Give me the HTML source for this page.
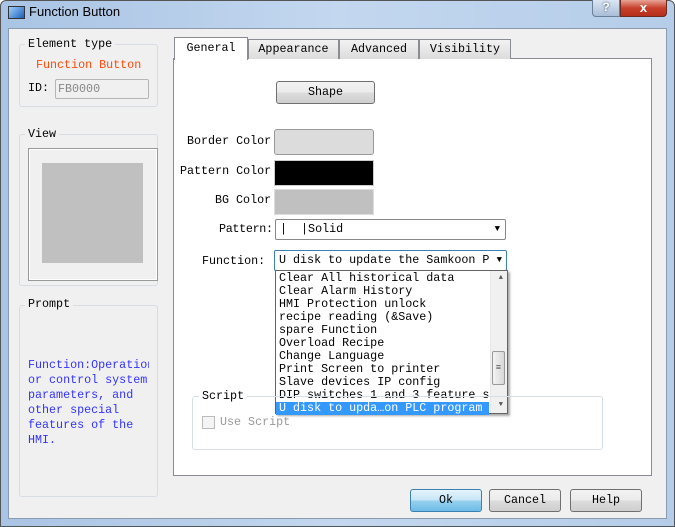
<!DOCTYPE html><html><head><style>
*{margin:0;padding:0;box-sizing:border-box}
body{width:675px;height:527px;overflow:hidden;background:#fff;font-family:"Liberation Mono","DejaVu Sans Mono",monospace;font-size:11.7px;color:#000;position:relative}
.a{position:absolute}
.frame{left:0;top:0;width:675px;height:527px;background:linear-gradient(90deg,#a9c4e4,#c3d7ef 50%,#b5cde9);border:1px solid #555;border-radius:6px 6px 0 0}
.client{left:8px;top:28px;width:659px;height:491px;background:#f0f0f0;border:1px solid #8a9bb0}
.grp{border:1px solid #d8dde3;border-radius:3px}
.lbl{background:#f0f0f0;padding:0 3px}
.btn{border:1px solid #707070;border-radius:3px;background:linear-gradient(#f2f2f2,#ebebeb 50%,#dcdcdc 51%,#cfcfcf);text-align:center;line-height:21px}
.tab{top:39px;height:20px;border:1px solid #898c95;border-bottom:none;background:linear-gradient(#f2f2f2,#dcdcdc);text-align:center;line-height:19px}
.li{height:13px;line-height:13px;padding-left:3px;white-space:nowrap;overflow:hidden}
</style></head><body>
<div class="a frame"></div>
<div class="a" style="left:8px;top:6px;width:17px;height:13px;border:1px solid #333;background:linear-gradient(135deg,#9fd0ff,#1c5fb8)"></div>
<div class="a" style="left:29px;top:4px;font-family:'Liberation Sans',sans-serif;font-size:13px">Function Button</div>
<div class="a" style="left:592px;top:0;width:28px;height:17px;border:1px solid #6b7f99;border-top:none;border-radius:0 0 0 4px;background:linear-gradient(#dbe6f4,#a9bdd8);text-align:center;font:bold 12px 'Liberation Sans';color:#fff;text-shadow:0 0 2px #345">?</div>
<div class="a" style="left:620px;top:0;width:47px;height:17px;border:1px solid #6b2a22;border-top:none;border-radius:0 0 4px 0;background:linear-gradient(#e8a596,#c7402c 50%,#b62f1d);text-align:center;font:bold 13px 'Liberation Sans';color:#fff;line-height:15px">x</div>
<div class="a client"></div>

<div class="a grp" style="left:19px;top:44px;width:139px;height:63px"></div>
<div class="a lbl" style="left:25px;top:37px">Element type</div>
<div class="a" style="left:36px;top:58px;color:#ff4a0a">Function Button</div>
<div class="a" style="left:28px;top:81px">ID:</div>
<div class="a" style="left:55px;top:79px;width:94px;height:20px;border:1px solid #b5b5b5;border-radius:2px;background:#f0f0f0;color:#888;padding-left:2px;line-height:18px">FB0000</div>

<div class="a grp" style="left:19px;top:134px;width:139px;height:152px"></div>
<div class="a lbl" style="left:25px;top:127px">View</div>
<div class="a" style="left:28px;top:148px;width:130px;height:133px;border:1px solid #999;background:#f0f0f0;box-shadow:inset 0 0 0 1px #fff"></div>
<div class="a" style="left:42px;top:163px;width:101px;height:100px;background:#c0c0c0"></div>

<div class="a grp" style="left:19px;top:305px;width:139px;height:192px"></div>
<div class="a lbl" style="left:25px;top:297px">Prompt</div>
<div class="a" style="left:28px;top:358px;width:121px;color:#3333ff;line-height:15px;overflow:hidden;white-space:nowrap">Function:Operation<br>or control system<br>parameters, and<br>other special<br>features of the<br>HMI.</div>

<div class="a" style="left:173px;top:58px;width:479px;height:418px;background:#fff;border:1px solid #898c95"></div>
<div class="a tab" style="left:248px;width:91px">Appearance</div>
<div class="a tab" style="left:339px;width:80px">Advanced</div>
<div class="a tab" style="left:419px;width:92px">Visibility</div>
<div class="a" style="left:174px;top:37px;width:74px;height:23px;border:1px solid #898c95;border-bottom:none;background:#fff;text-align:center;line-height:21px">General</div>

<div class="a btn" style="left:276px;top:81px;width:99px;height:23px">Shape</div>
<div class="a" style="left:187px;top:134px">Border Color</div>
<div class="a btn" style="left:274px;top:129px;width:100px;height:26px;background:#dcdcdc;border-color:#999"></div>
<div class="a" style="left:180px;top:164px">Pattern Color</div>
<div class="a" style="left:274px;top:160px;width:100px;height:26px;background:#000;border:1px solid #ccc"></div>
<div class="a" style="left:215px;top:193px">BG Color</div>
<div class="a" style="left:274px;top:189px;width:100px;height:26px;background:#c0c0c0;border:1px solid #ddd"></div>
<div class="a" style="left:219px;top:222px;letter-spacing:-0.3px">Pattern:</div>
<div class="a" style="left:275px;top:219px;width:231px;height:21px;border:1px solid #888;border-radius:2px;background:#fff;line-height:19px;padding-left:4px">|&nbsp;&nbsp;|Solid<span class="a" style="right:5px;top:0;font-size:9px">▼</span></div>
<div class="a" style="left:202px;top:254px">Function:</div>
<div class="a" style="left:274px;top:250px;width:233px;height:21px;border:1px solid #3c7fb1;border-radius:2px;background:#fff;line-height:19px;padding-left:4px;white-space:nowrap;overflow:hidden">U disk to update the Samkoon P<span class="a" style="right:4px;top:0;font-size:9px;background:#fff;padding-left:3px">▼</span></div>
<div class="a" style="left:275px;top:270px;width:233px;height:144px;border:1px solid #646464;background:#fff;box-shadow:2px 2px 2px #aaa">
<div style="padding-top:1px;width:213px">
<div class="li">Clear All historical data</div><div class="li">Clear Alarm History</div><div class="li">HMI Protection unlock</div><div class="li">recipe reading (&amp;Save)</div><div class="li">spare Function</div><div class="li">Overload Recipe</div><div class="li">Change Language</div><div class="li">Print Screen to printer</div><div class="li">Slave devices IP config</div><div class="li">DIP switches 1 and 3 feature s</div><div class="li" style="background:#3399ff;color:#fff">U disk to upda…on PLC program</div>
</div>
<div class="a" style="right:0;top:0;width:17px;height:142px;background:#f0f0f0;border-left:1px solid #e8e8e8"></div>
<div class="a" style="right:4px;top:3px;font-size:7px;color:#555">▲</div>
<div class="a" style="right:4px;top:130px;font-size:7px;color:#555">▼</div>
<div class="a" style="right:2px;top:80px;width:13px;height:34px;border:1px solid #999;border-radius:2px;background:linear-gradient(90deg,#f3f3f3,#d8d8d8);text-align:center;font-size:9px;line-height:32px;color:#555">≡</div>
</div>

<div class="a grp" style="left:192px;top:396px;width:411px;height:54px;border-color:#d5dfe5"></div>
<div class="a" style="left:199px;top:389px;background:#fff;padding:0 3px">Script</div>
<div class="a" style="left:202px;top:416px;width:13px;height:13px;border:1px solid #bbb;background:#f4f4f4"></div>
<div class="a" style="left:220px;top:415px;color:#999">Use Script</div>

<div class="a btn" style="left:410px;top:489px;width:72px;height:23px;border-color:#3c7fb1;background:linear-gradient(#e5f4fc,#c4e5f6 50%,#98d1ef 51%,#6dbce6)">Ok</div>
<div class="a btn" style="left:489px;top:489px;width:72px;height:23px">Cancel</div>
<div class="a btn" style="left:570px;top:489px;width:72px;height:23px">Help</div>
</body></html>
